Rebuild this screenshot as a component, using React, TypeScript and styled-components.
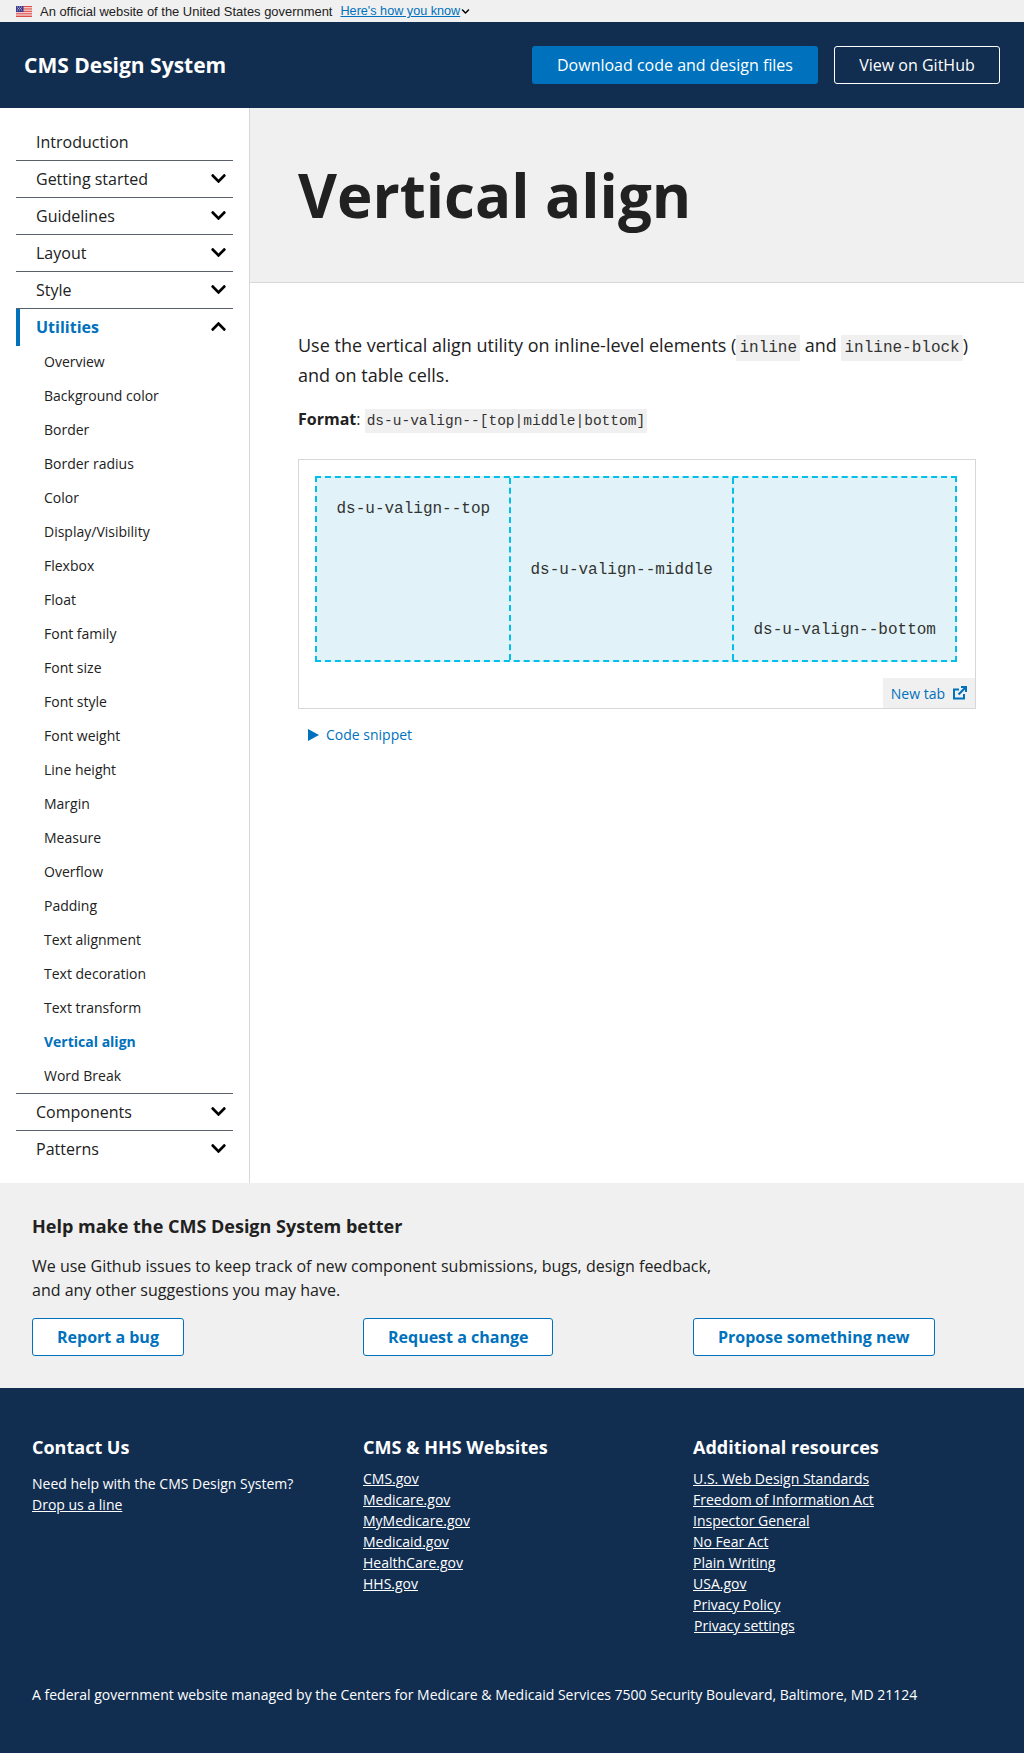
import styled, { createGlobalStyle } from 'styled-components';
import { FaChevronDown, FaChevronUp } from 'react-icons/fa';

const topItems = ['Getting started', 'Guidelines', 'Layout', 'Style'];
const utilityItems = [
  'Overview',
  'Background color',
  'Border',
  'Border radius',
  'Color',
  'Display/Visibility',
  'Flexbox',
  'Float',
  'Font family',
  'Font size',
  'Font style',
  'Font weight',
  'Line height',
  'Margin',
  'Measure',
  'Overflow',
  'Padding',
  'Text alignment',
  'Text decoration',
  'Text transform',
  'Vertical align',
  'Word Break',
];
const hhsLinks = ['CMS.gov', 'Medicare.gov', 'MyMedicare.gov', 'Medicaid.gov', 'HealthCare.gov', 'HHS.gov'];
const resourceLinks = [
  'U.S. Web Design Standards',
  'Freedom of Information Act',
  'Inspector General',
  'No Fear Act',
  'Plain Writing',
  'USA.gov',
  'Privacy Policy',
];

const Flag = () => (
  <svg width="16" height="11" viewBox="0 0 16 11">
    <rect width="16" height="11" fill="#fff" />
    <path d="M0 .5h16M0 2.2h16M0 3.9h16M0 5.6h16M0 7.3h16M0 9h16M0 10.5h16" stroke="#d83933" strokeWidth="0.9" />
    <rect width="7.5" height="6" fill="#3c3b8e" />
    <path d="M1 1h.8M3 1h.8M5 1h.8M2 2.5h.8M4 2.5h.8M1 4h.8M3 4h.8M5 4h.8" stroke="#fff" strokeWidth="0.8" />
  </svg>
);

const ExternalIcon = () => (
  <svg width="14" height="14" viewBox="0 0 14 14" fill="none" stroke="#0071bc">
    <path d="M11 8v4.6H1V3.4H6" strokeWidth="2" />
    <path d="M5.5 8.5 12 2" strokeWidth="2.2" />
    <path d="M8 1h5v5" strokeWidth="2" />
  </svg>
);

const App = () => (
  <>
    <GlobalStyle />
    <UsaBanner>
      <Flag />
      <BannerText>An official website of the United States government</BannerText>
      <BannerLink>Here's how you know</BannerLink>
      <FaChevronDown size={9} color="#000" />
    </UsaBanner>

    <Header>
      <Brand>CMS Design System</Brand>
      <HeaderActions>
        <PrimaryButton>Download code and design files</PrimaryButton>
        <InverseButton>View on GitHub</InverseButton>
      </HeaderActions>
    </Header>

    <Body>
      <Sidebar>
        <NavRow>Introduction</NavRow>
        {topItems.map((item) => (
          <NavRow key={item}>
            {item}
            <FaChevronDown size={17} color="#000" />
          </NavRow>
        ))}
        <NavRow $active>
          Utilities
          <FaChevronUp size={17} color="#000" />
        </NavRow>
        <SubList>
          {utilityItems.map((item) => (
            <SubItem key={item} $current={item === 'Vertical align'}>
              {item}
            </SubItem>
          ))}
        </SubList>
        <NavRow>
          Components
          <FaChevronDown size={17} color="#000" />
        </NavRow>
        <NavRow>
          Patterns
          <FaChevronDown size={17} color="#000" />
        </NavRow>
      </Sidebar>

      <Main>
        <Hero>
          <Title>Vertical align</Title>
        </Hero>
        <Content>
          <Lead>
            Use the vertical align utility on inline-level elements (<Code>inline</Code> and{' '}
            <Code>inline-block</Code>) and on table cells.
          </Lead>
          <FormatLine>
            <strong>Format</strong>: <FormatCode>ds-u-valign--[top|middle|bottom]</FormatCode>
          </FormatLine>
          <DemoBox>
            <DemoTable>
              <DemoCell $align="start" $width={192}>ds-u-valign--top</DemoCell>
              <DemoCell $align="center" $width={223}>ds-u-valign--middle</DemoCell>
              <DemoCell $align="end" $width={223}>ds-u-valign--bottom</DemoCell>
            </DemoTable>
            <NewTabRow>
              <NewTab>
                New tab
                <ExternalIcon />
              </NewTab>
            </NewTabRow>
          </DemoBox>
          <Snippet>
            <SnippetArrow />
            Code snippet
          </Snippet>
        </Content>
      </Main>
    </Body>

    <HelpSection>
      <HelpTitle>Help make the CMS Design System better</HelpTitle>
      <HelpText>
        We use Github issues to keep track of new component submissions, bugs, design feedback, and any other
        suggestions you may have.
      </HelpText>
      <ThreeColumns>
        <div>
          <OutlineButton>Report a bug</OutlineButton>
        </div>
        <div>
          <OutlineButton>Request a change</OutlineButton>
        </div>
        <div>
          <OutlineButton>Propose something new</OutlineButton>
        </div>
      </ThreeColumns>
    </HelpSection>

    <Footer>
      <ThreeColumns>
        <FooterColumn>
          <FooterTitle>Contact Us</FooterTitle>
          <FooterText>Need help with the CMS Design System?</FooterText>
          <FooterLink>Drop us a line</FooterLink>
        </FooterColumn>
        <FooterColumn>
          <FooterTitle>CMS &amp; HHS Websites</FooterTitle>
          {hhsLinks.map((link) => (
            <FooterLink key={link}>{link}</FooterLink>
          ))}
        </FooterColumn>
        <FooterColumn>
          <FooterTitle>Additional resources</FooterTitle>
          {resourceLinks.map((link) => (
            <FooterLink key={link}>{link}</FooterLink>
          ))}
          <PrivacySettings>Privacy settings</PrivacySettings>
        </FooterColumn>
      </ThreeColumns>
      <FooterNote>
        A federal government website managed by the Centers for Medicare &amp; Medicaid Services 7500 Security
        Boulevard, Baltimore, MD 21124
      </FooterNote>
    </Footer>
  </>
);

export default App;

const GlobalStyle = createGlobalStyle`
  html, body {
    margin: 0;
    padding: 0;
    background: #fff;
    color: #212121;
    font-family: 'Open Sans', sans-serif;
  }
`;

const UsaBanner = styled.div`
  display: flex;
  align-items: center;
  height: 22px;
  padding-left: 16px;
  background: #f0f0f0;
  font-family: 'Liberation Sans', Arial, sans-serif;
  font-size: 12.95px;
`;

const BannerText = styled.span`
  margin-left: 8px;
  color: #212121;
`;

const BannerLink = styled.a`
  margin-left: 8px;
  margin-right: 1px;
  color: #0071bc;
  font-size: 12.65px;
  text-decoration: underline;
`;

const Header = styled.header`
  display: flex;
  align-items: center;
  justify-content: space-between;
  height: 86px;
  padding: 0 24px;
  background: #112e51;
`;

const Brand = styled.div`
  color: #fff;
  font-size: 21px;
  font-weight: 700;
`;

const HeaderActions = styled.div`
  display: flex;
  gap: 16px;
`;

const PrimaryButton = styled.a`
  display: flex;
  align-items: center;
  justify-content: center;
  box-sizing: border-box;
  width: 286px;
  height: 38px;
  border-radius: 3px;
  background: #0071bc;
  color: #fff;
  font-size: 16px;
`;

const InverseButton = styled(PrimaryButton)`
  width: 166px;
  background: transparent;
  border: 1px solid #fff;
`;

const Body = styled.div`
  display: flex;
  height: 1075px;
`;

const Sidebar = styled.nav`
  box-sizing: border-box;
  width: 250px;
  flex: none;
  padding: 16px 16px 0;
  border-right: 1px solid #d6d7d9;
`;

const NavRow = styled.div<{ $active?: boolean }>`
  display: flex;
  align-items: center;
  justify-content: space-between;
  box-sizing: border-box;
  width: 217px;
  height: 37px;
  padding: 0 6px 2px ${(p) => (p.$active ? '16px' : '20px')};
  border-left: ${(p) => (p.$active ? '4px solid #0071bc' : 'none')};
  box-shadow: 0 -1px 0 #5b616b;
  color: ${(p) => (p.$active ? '#0071bc' : '#212121')};
  font-size: 16px;
  font-weight: ${(p) => (p.$active ? 700 : 400)};

  &:first-child {
    box-shadow: none;
  }
`;

const SubList = styled.div`
  padding-bottom: 0;
`;

const SubItem = styled.div<{ $current?: boolean }>`
  display: flex;
  align-items: center;
  box-sizing: border-box;
  height: 34px;
  padding: 0 0 4px 28px;
  color: ${(p) => (p.$current ? '#0071bc' : '#212121')};
  font-size: 14px;
  font-weight: ${(p) => (p.$current ? 700 : 400)};
`;

const Main = styled.main`
  flex: 1;
  min-width: 0;
`;

const Hero = styled.div`
  display: flex;
  align-items: center;
  box-sizing: border-box;
  height: 175px;
  padding: 0 48px;
  background: #f0f0f0;
  border-bottom: 1px solid #d6d7d9;
`;

const Title = styled.h1`
  margin: 0;
  color: #212121;
  font-size: 60px;
  font-weight: 700;
  line-height: 1.3;
`;

const Content = styled.div`
  padding: 47px 48px 0;
`;

const Lead = styled.p`
  margin: 0 0 16px;
  font-size: 18px;
  line-height: 30px;
`;

const Code = styled.code`
  padding: 4px 3px;
  background: #f0f0f0;
  color: #333;
  font-family: 'Liberation Mono', monospace;
  font-size: 16px;
  line-height: 1;
`;

const FormatLine = styled.p`
  margin: 0 0 27px;
  font-size: 16px;
  line-height: 26px;
`;

const FormatCode = styled.code`
  padding: 4px 2px;
  background: #f0f0f0;
  color: #333;
  font-family: 'Liberation Mono', monospace;
  font-size: 14.5px;
  line-height: 1;
`;

const DemoBox = styled.div`
  box-sizing: border-box;
  height: 250px;
  padding: 16px 16px 0;
  border: 1px solid #d6d7d9;
`;

const DemoTable = styled.div`
  display: flex;
  box-sizing: border-box;
  width: 642px;
  height: 186px;
  border: 2px dashed #02bfe7;
  background: #e1f3f8;
`;

const DemoCell = styled.div<{ $align: string; $width: number }>`
  display: flex;
  align-items: ${(p) => p.$align};
  box-sizing: border-box;
  width: ${(p) => p.$width}px;
  padding: 21px 19.5px 20px;
  color: #333;
  font-family: 'Liberation Mono', monospace;
  font-size: 16px;
  line-height: 20px;
  white-space: nowrap;

  & + & {
    border-left: 2px dashed #02bfe7;
  }
`;

const NewTabRow = styled.div`
  display: flex;
  justify-content: flex-end;
  margin: 16px -16px 0 0;
`;

const NewTab = styled.a`
  display: flex;
  align-items: center;
  gap: 8px;
  height: 30px;
  padding: 0 8px;
  background: #f0f0f0;
  color: #0071bc;
  font-size: 14px;
`;

const Snippet = styled.div`
  display: flex;
  align-items: center;
  gap: 7px;
  margin-top: 16px;
  padding-left: 10px;
  color: #0071bc;
  font-size: 14px;
`;

const SnippetArrow = styled.span`
  width: 0;
  height: 0;
  border-top: 6px solid transparent;
  border-bottom: 6px solid transparent;
  border-left: 11px solid #0071bc;
`;

const HelpSection = styled.section`
  box-sizing: border-box;
  height: 205px;
  padding: 31px 32px;
  background: #f0f0f0;
`;

const HelpTitle = styled.h2`
  margin: 0 0 16px;
  font-size: 18px;
  font-weight: 700;
  line-height: 24px;
`;

const HelpText = styled.p`
  width: 680px;
  margin: 0 0 16px;
  font-size: 16px;
  line-height: 24px;
`;

const ThreeColumns = styled.div`
  display: grid;
  grid-template-columns: 331px 330px 1fr;
`;

const OutlineButton = styled.a`
  display: inline-flex;
  align-items: center;
  box-sizing: border-box;
  height: 38px;
  padding: 0 24px;
  border: 1px solid #0071bc;
  border-radius: 3px;
  background: #fff;
  color: #0071bc;
  font-size: 16px;
  font-weight: 700;
`;

const Footer = styled.footer`
  box-sizing: border-box;
  height: 365px;
  padding: 46px 32px 0;
  background: #112e51;
  color: #fff;
`;

const FooterColumn = styled.div`
  display: flex;
  flex-direction: column;
  align-items: flex-start;
  font-size: 14px;
  line-height: 21px;
`;

const FooterTitle = styled.h3`
  margin: 0 0 8px;
  font-size: 18px;
  font-weight: 700;
  line-height: 26px;
`;

const FooterText = styled.div`
  margin-top: 5px;
`;

const FooterLink = styled.a`
  color: #fff;
  text-decoration: underline;
`;

const PrivacySettings = styled(FooterLink)`
  margin-left: 1px;
`;

const FooterNote = styled.p`
  margin: 49px 0 0;
  font-size: 14px;
  line-height: 20px;
`;
